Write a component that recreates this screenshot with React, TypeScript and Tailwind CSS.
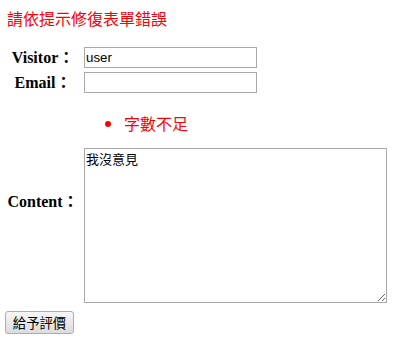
import React from "react";

const cjk = "font-['Noto_Sans_CJK_TC',sans-serif]";
const label =
  "flex items-center justify-center font-bold text-[16px] leading-[18px] text-black font-['Liberation_Serif','Noto_Sans_CJK_TC',serif]";

export default function App() {
  return (
    <div className="w-[408px] h-[339px] bg-white overflow-hidden">
      <div className={`pl-[7px] pt-[8px] text-[16px] leading-[20px] text-[#ff0000] ${cjk}`}>
        請依提示修復表單錯誤
      </div>

      <div className="mt-[19px] ml-[2px] grid grid-cols-[82px_auto] gap-y-[4px]">
        <div className={label}>Visitor：</div>
        <div>
          <input
            defaultValue="user"
            className="block w-[173px] h-[21px] border border-[#a9a9a9] px-[1px] text-[13.33px] font-['Liberation_Sans',sans-serif] text-black outline-none"
          />
        </div>

        <div className={label}>Email：</div>
        <div>
          <input className="block w-[173px] h-[21px] border border-[#a9a9a9] px-[1px] text-[13.33px] font-['Liberation_Sans',sans-serif] outline-none" />
        </div>

        <div className={`${label} row-span-2 pt-[3px]`}>Content：</div>
        <div className="h-[47px] pt-[16px]">
          <ul className={`list-disc list-outside pl-[40px] text-[16px] leading-[20px] text-[#ff0000] ${cjk}`}>
            <li>字數不足</li>
          </ul>
        </div>
        <div>
          <textarea
            defaultValue="我沒意見"
            className={`block w-[303px] h-[155px] border border-[#a9a9a9] px-[1px] py-[2px] text-[13px] leading-[16px] text-black outline-none ${cjk}`}
          />
        </div>
      </div>

      <button
        className={`mt-[8px] ml-[5px] w-[69px] h-[23px] border border-[#adadad] rounded-[3px] bg-gradient-to-b from-[#f6f6f6] to-[#dcdcdc] text-[13.33px] leading-[16px] text-black ${cjk}`}
      >
        給予評價
      </button>
    </div>
  );
}
